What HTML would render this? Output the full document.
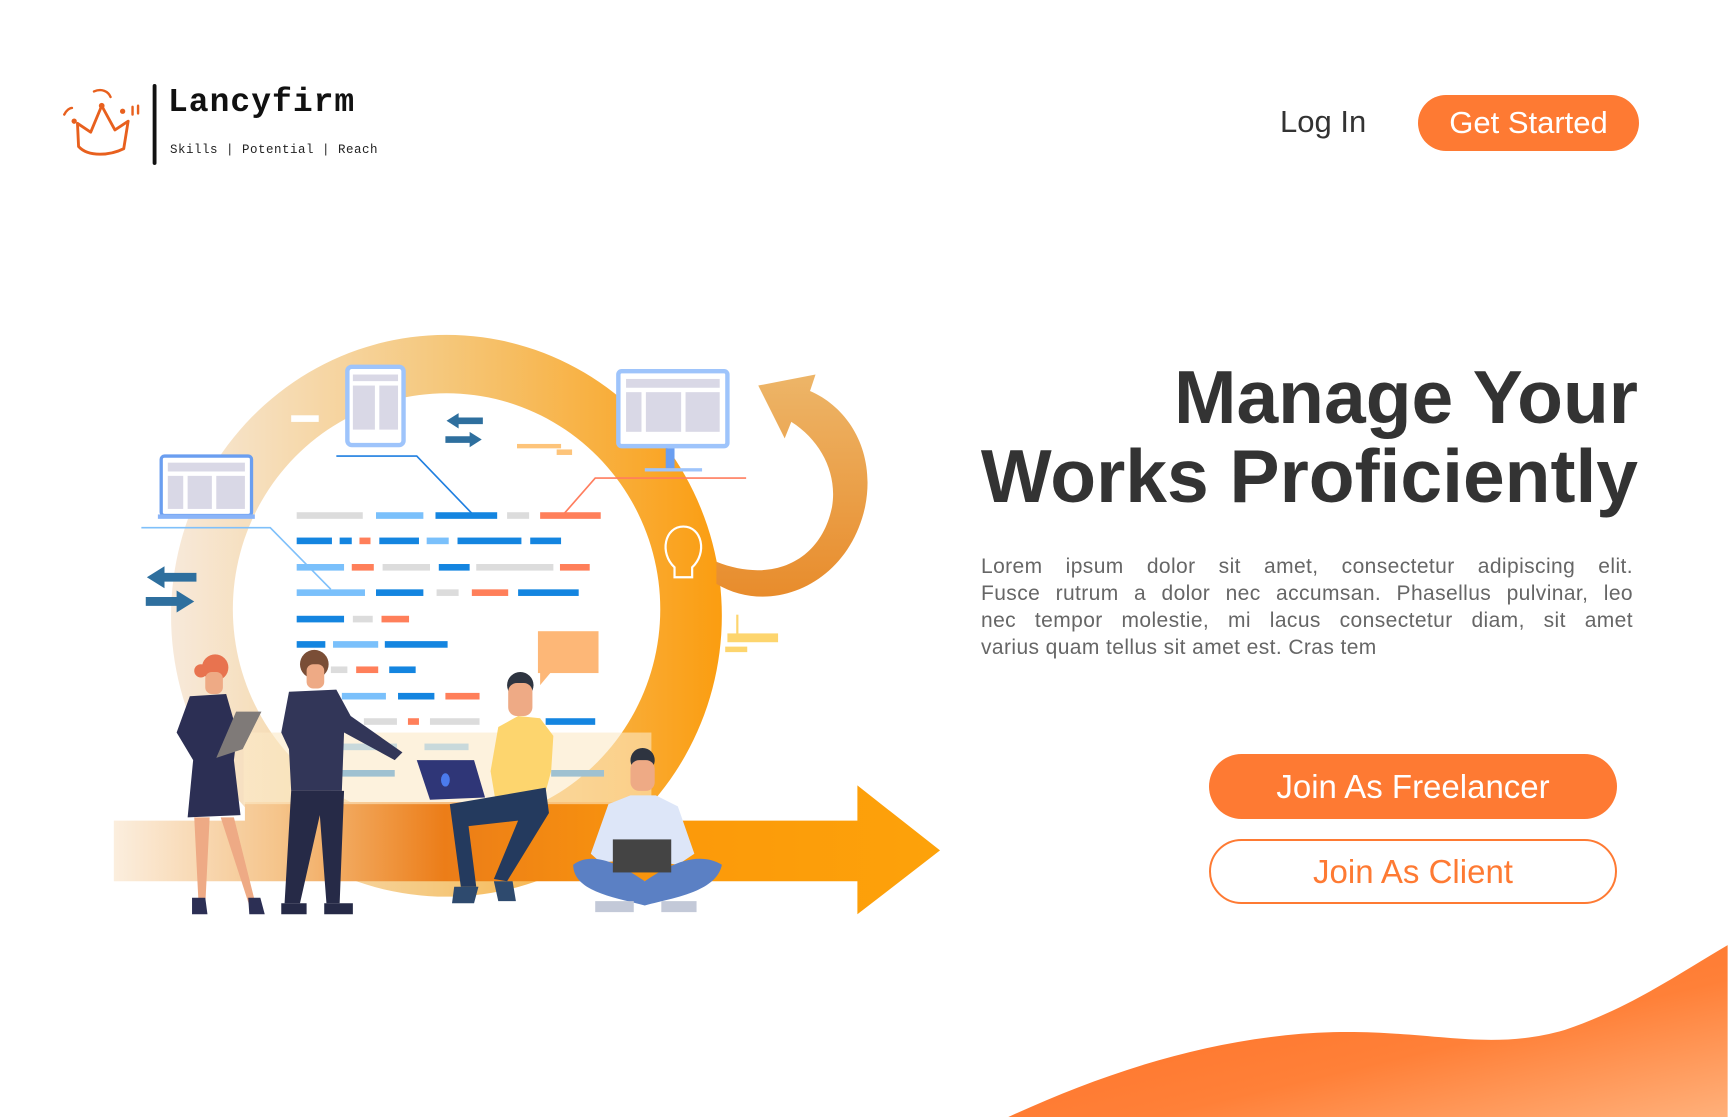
<!DOCTYPE html>
<html><head><meta charset="utf-8"><style>
*{margin:0;padding:0;box-sizing:border-box}
body{width:1728px;height:1117px;overflow:hidden;background:#fff;position:relative;font-family:"Liberation Sans",sans-serif}
svg.bg{position:absolute;left:0;top:0;width:1728px;height:1117px}
.abs{position:absolute}
.brand{left:168px;top:84px;font-family:"Comic Sans MS","Liberation Mono",monospace;font-size:33px;font-weight:bold;letter-spacing:1px;color:#111}
.tag{left:170px;top:143px;font-family:"Liberation Mono",monospace;font-size:12.5px;color:#222;letter-spacing:0.5px}
.login{left:1280px;top:104px;font-size:31px;color:#333}
.gs{left:1418px;top:95px;width:221px;height:56px;border-radius:28px;background:#fe7a33;color:#fff;font-size:31px;line-height:56px;text-align:center}
h1{position:absolute;right:90px;top:358px;font-size:75px;line-height:79px;font-weight:bold;color:#333;text-align:right;letter-spacing:0}
.p{left:981px;top:553px;width:652px;font-size:21px;line-height:27px;color:#666;letter-spacing:0.4px}
.p div{text-align:justify;text-align-last:justify}
.p div.l{text-align-last:left}
.b1{left:1209px;top:754px;width:408px;height:65px;border-radius:33px;background:#fe7a33;color:#fff;font-size:33px;line-height:65px;text-align:center}
.b2{left:1209px;top:839px;width:408px;height:65px;border-radius:33px;border:2px solid #fe7a33;color:#fe7a33;font-size:33px;line-height:61px;text-align:center}
</style></head><body>
<svg class="bg" viewBox="0 0 1568 1014" xmlns="http://www.w3.org/2000/svg">
<defs>
<linearGradient id="ring" x1="0" y1="0" x2="1" y2="0"><stop offset="0" stop-color="#f7e9da"/><stop offset=".5" stop-color="#f5c77a"/><stop offset="1" stop-color="#fb9d10"/></linearGradient>
<linearGradient id="arr" x1="0" y1="0" x2="1" y2="0"><stop offset="0" stop-color="#fbeede"/><stop offset=".2" stop-color="#f5c48a"/><stop offset=".4" stop-color="#ec7d18"/><stop offset=".7" stop-color="#fc9a0a"/><stop offset="1" stop-color="#fda20a"/></linearGradient>
<linearGradient id="curl" x1="0" y1="0" x2="0" y2="1"><stop offset="0" stop-color="#edb568"/><stop offset="1" stop-color="#e88c2c"/></linearGradient>
<linearGradient id="wave" x1="0" y1="0" x2="1" y2="1"><stop offset="0" stop-color="#ff6d22"/><stop offset=".6" stop-color="#ff8038"/><stop offset="1" stop-color="#ffb07a"/></linearGradient>
</defs>
<path d="M915 1014 C1000 975 1100 940 1210 937 C1300 935 1350 955 1420 935 C1480 915 1530 880 1568 858 L1568 1014 Z" fill="url(#wave)"/>
<path fill-rule="evenodd" fill="url(#ring)" d="M405 304 A250 255 0 1 1 404.9 304 Z M405 357 A194 196 0 1 0 405.1 357 Z"/>
<path d="M103 745 H222 V728 H593 V745 H778 V713 L853 772 L778 830 V800 H103 Z" fill="url(#arr)"/>
<path d="M650 530 C700 560 770 530 785 460 C795 410 770 370 735 355 L740 340 L688 350 L712 398 L718 383 C745 400 760 430 755 460 C745 510 700 530 650 510 Z" fill="url(#curl)"/>
<rect x="146" y="414" width="82" height="54" rx="3" fill="#fff" stroke="#6a9ef0" stroke-width="3"/>
<rect x="143" y="467" width="88" height="4" fill="#8ab4f8"/>
<rect x="152" y="420" width="70" height="8" fill="#d9d8e6"/><rect x="152" y="432" width="14" height="30" fill="#d9d8e6"/><rect x="170" y="432" width="22" height="30" fill="#d9d8e6"/><rect x="196" y="432" width="26" height="30" fill="#d9d8e6"/>
<rect x="315" y="333" width="51" height="71" rx="4" fill="#fff" stroke="#9ec4fb" stroke-width="4"/>
<rect x="320" y="340" width="41" height="6" fill="#d9d8e6"/><rect x="320" y="350" width="20" height="40" fill="#d9d8e6"/><rect x="344" y="350" width="17" height="40" fill="#d9d8e6"/>
<rect x="561" y="337" width="99" height="68" rx="3" fill="#fff" stroke="#9ec4fb" stroke-width="4"/>
<rect x="568" y="344" width="85" height="8" fill="#d9d8e6"/><rect x="568" y="356" width="14" height="36" fill="#d9d8e6"/><rect x="586" y="356" width="32" height="36" fill="#d9d8e6"/><rect x="622" y="356" width="31" height="36" fill="#d9d8e6"/>
<rect x="604" y="407" width="8" height="18" fill="#6a9ef0"/><rect x="585" y="425" width="52" height="3" fill="#9ec4fb"/>
<path d="M305 414 H378 L428 466" stroke="#1f7fe0" stroke-width="1.5" fill="none"/>
<path d="M128 479 H245 L300 535" stroke="#7fc0fa" stroke-width="1.5" fill="none"/>
<path d="M677 434 H540 L512 466" stroke="#ff7d5e" stroke-width="1.5" fill="none"/>
<rect x="264" y="377" width="25" height="6" fill="#fff"/>
<rect x="469" y="403" width="40" height="4" fill="#fdc47a"/><rect x="505" y="408" width="14" height="5" fill="#fdc47a"/>
<rect x="660" y="575" width="46" height="8" fill="#fdd56e"/><rect x="668" y="558" width="2" height="22" fill="#fdd56e"/><rect x="658" y="587" width="20" height="5" fill="#fdd56e"/>
<path d="M133 524 L149 514 V520 H178 V528 H149 V534 Z M176 546 L160 536 V542 H132 V550 H160 V556 Z" fill="#2e6f9e"/>
<path d="M405 382 L416 375 V379 H438 V385 H416 V389 Z M437 399 L426 392 V396 H404 V402 H426 V406 Z" fill="#2e6f9e"/>
<path d="M612 515 C598 502 603 478 620 478 C637 478 642 502 628 515 V524 H612 Z" fill="none" stroke="#fff" stroke-width="2"/>
<g>
<rect x="269" y="465" width="60" height="6" fill="#dcdcdc"/><rect x="341" y="465" width="43" height="6" fill="#7ac0fb"/><rect x="395" y="465" width="56" height="6" fill="#1485e0"/><rect x="460" y="465" width="20" height="6" fill="#dcdcdc"/><rect x="490" y="465" width="55" height="6" fill="#ff7f5a"/>
<rect x="269" y="488" width="32" height="6" fill="#1485e0"/><rect x="308" y="488" width="11" height="6" fill="#1485e0"/><rect x="326" y="488" width="10" height="6" fill="#ff7f5a"/><rect x="344" y="488" width="36" height="6" fill="#1485e0"/><rect x="387" y="488" width="20" height="6" fill="#7ac0fb"/><rect x="415" y="488" width="58" height="6" fill="#1485e0"/><rect x="481" y="488" width="28" height="6" fill="#1485e0"/>
<rect x="269" y="512" width="43" height="6" fill="#7ac0fb"/><rect x="319" y="512" width="20" height="6" fill="#ff7f5a"/><rect x="347" y="512" width="43" height="6" fill="#dcdcdc"/><rect x="398" y="512" width="28" height="6" fill="#1485e0"/><rect x="432" y="512" width="70" height="6" fill="#dcdcdc"/><rect x="508" y="512" width="27" height="6" fill="#ff7f5a"/>
<rect x="269" y="535" width="62" height="6" fill="#7ac0fb"/><rect x="341" y="535" width="43" height="6" fill="#1485e0"/><rect x="396" y="535" width="20" height="6" fill="#dcdcdc"/><rect x="428" y="535" width="33" height="6" fill="#ff7f5a"/><rect x="470" y="535" width="55" height="6" fill="#1485e0"/>
<rect x="269" y="559" width="43" height="6" fill="#1485e0"/><rect x="320" y="559" width="18" height="6" fill="#dcdcdc"/><rect x="346" y="559" width="25" height="6" fill="#ff7f5a"/>
<rect x="269" y="582" width="26" height="6" fill="#1485e0"/><rect x="302" y="582" width="41" height="6" fill="#7ac0fb"/><rect x="349" y="582" width="57" height="6" fill="#1485e0"/>
<rect x="300" y="605" width="15" height="6" fill="#dcdcdc"/><rect x="323" y="605" width="20" height="6" fill="#ff7f5a"/><rect x="353" y="605" width="24" height="6" fill="#1485e0"/>
<rect x="310" y="629" width="40" height="6" fill="#7ac0fb"/><rect x="361" y="629" width="33" height="6" fill="#1485e0"/><rect x="404" y="629" width="31" height="6" fill="#ff7f5a"/>
<rect x="330" y="652" width="30" height="6" fill="#dcdcdc"/><rect x="370" y="652" width="10" height="6" fill="#ff7f5a"/><rect x="390" y="652" width="45" height="6" fill="#dcdcdc"/><rect x="495" y="652" width="45" height="6" fill="#1485e0"/>
<rect x="310" y="675" width="50" height="6" fill="#7ac0fb"/><rect x="385" y="675" width="40" height="6" fill="#7ac0fb"/>
<rect x="310" y="699" width="48" height="6" fill="#1485e0"/><rect x="500" y="699" width="48" height="6" fill="#1485e0"/>
</g>
<rect x="221" y="665" width="370" height="65" fill="#fbe9c6" opacity=".6"/>
<rect x="488" y="573" width="55" height="38" fill="#fdb777"/><path d="M490 610 L490 622 L500 610Z" fill="#fdb777"/>
<circle cx="195" cy="606" r="12" fill="#e8734f"/><circle cx="182" cy="609" r="6" fill="#e8734f"/>
<rect x="186" y="610" width="16" height="20" rx="6" fill="#eeaa85"/>
<path d="M172 632 L205 630 L215 665 L212 690 L218 740 L170 742 L175 690 L160 665 Z" fill="#2c2f54"/>
<path d="M176 742 H190 L186 822 H180 Z M200 742 H212 L232 822 H226 Z" fill="#eeaa85"/>
<path d="M174 815 L186 815 L188 830 L174 830 Z M225 815 L236 815 L240 830 L226 830 Z" fill="#2c2f54"/>
<path d="M196 688 L214 646 L237 646 L220 680 Z" fill="#7f7a78"/>
<circle cx="285" cy="603" r="13" fill="#7a4e36"/><rect x="278" y="603" width="16" height="22" rx="6" fill="#eeaa85"/>
<path d="M262 628 L305 626 L318 650 L365 683 L358 690 L312 665 L310 718 L264 718 L262 680 L255 665 Z" fill="#323658"/>
<path d="M264 718 H312 L308 820 H296 L290 740 L272 820 H258 Z" fill="#262a47"/>
<path d="M255 820 H278 V830 H255 Z M294 820 H320 V830 H294 Z" fill="#262a47"/>
<circle cx="472" cy="622" r="12" fill="#2e3440"/><rect x="461" y="620" width="22" height="30" rx="8" fill="#eeaa85"/>
<path d="M452 660 L470 650 L490 652 L502 668 L500 700 L492 730 L450 730 L445 700 Z" fill="#fdd56e"/>
<path d="M408 730 L495 715 L498 738 L460 800 L448 798 L470 745 L425 750 L432 805 L418 805 Z" fill="#243a5e"/>
<path d="M378 690 L430 690 L440 724 L390 726 Z" fill="#2f3677"/><ellipse cx="404" cy="708" rx="4" ry="6" fill="#4b7bec"/>
<path d="M412 805 H434 L430 820 H410 Z M448 800 H465 L468 818 H452 Z" fill="#2e4a6e"/>
<circle cx="583" cy="690" r="11" fill="#2e3440"/><rect x="572" y="690" width="22" height="28" rx="8" fill="#eeaa85"/>
<path d="M552 730 L572 722 L595 722 L615 732 L630 775 L615 785 L580 780 L545 783 L536 775 Z" fill="#dde6f8"/>
<path d="M520 785 C540 770 570 790 585 800 C600 790 630 770 655 785 C650 810 610 815 585 822 C560 815 520 810 520 785 Z" fill="#5b80c4"/>
<rect x="556" y="762" width="53" height="30" fill="#444"/>
<path d="M540 818 H575 V828 H540 Z M600 818 H632 V828 H600 Z" fill="#c3c9d8"/>
<path d="M70 112 L71 133 C80 143 100 141 112 135 L116 110 L104 118 L92 96 L82 120 Z" fill="none" stroke="#e8601e" stroke-width="2.6" stroke-linejoin="round"/>
<circle cx="92" cy="96" r="2.6" fill="#e8601e"/><circle cx="111" cy="101" r="2.4" fill="#e8601e"/><circle cx="67" cy="110" r="2.4" fill="#e8601e"/>
<path d="M85 83 C92 80 98 83 100 88 M58 104 C60 100 63 98 65 98 M120 97 V104 M125 96 V103" stroke="#e8601e" stroke-width="2.2" fill="none" stroke-linecap="round"/>
<path d="M140 78 V148" stroke="#111" stroke-width="3.5" stroke-linecap="round"/>
</svg>
<div class="abs brand">Lancyfirm</div>
<div class="abs tag">Skills | Potential | Reach</div>
<div class="abs login">Log In</div>
<div class="abs gs">Get Started</div>
<h1>Manage Your<br>Works Proficiently</h1>
<div class="abs p">
<div>Lorem ipsum dolor sit amet, consectetur adipiscing elit.</div>
<div>Fusce rutrum a dolor nec accumsan. Phasellus pulvinar, leo</div>
<div>nec tempor molestie, mi lacus consectetur diam, sit amet</div>
<div class="l">varius quam tellus sit amet est. Cras tem</div>
</div>
<div class="abs b1">Join As Freelancer</div>
<div class="abs b2">Join As Client</div>
</body></html>
